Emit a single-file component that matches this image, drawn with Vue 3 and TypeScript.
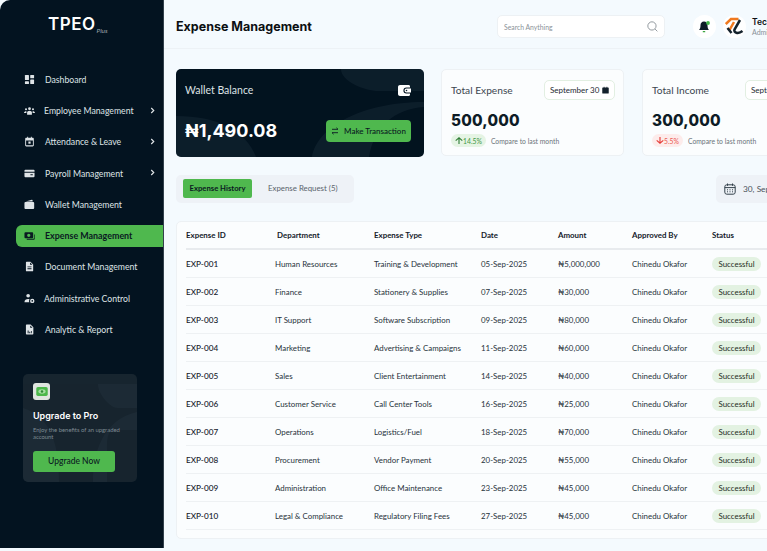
<script setup lang="ts">
interface NavItem { label: string; icon: string; arrow?: boolean; active?: boolean; shift?: boolean }
const nav: NavItem[] = [
  { label: 'Dashboard', icon: 'dash' },
  { label: 'Employee Management', icon: 'people', arrow: true, shift: true },
  { label: 'Attendance & Leave', icon: 'cal', arrow: true },
  { label: 'Payroll Management', icon: 'pay', arrow: true },
  { label: 'Wallet Management', icon: 'wallet' },
  { label: 'Expense Management', icon: 'cash', active: true },
  { label: 'Document Management', icon: 'doc' },
  { label: 'Administrative Control', icon: 'admin', shift: true },
  { label: 'Analytic & Report', icon: 'report' },
]
const rows = [
  ['EXP-001', 'Human Resources', 'Training & Development', '05-Sep-2025', '₦5,000,000'],
  ['EXP-002', 'Finance', 'Stationery & Supplies', '07-Sep-2025', '₦30,000'],
  ['EXP-003', 'IT Support', 'Software Subscription', '09-Sep-2025', '₦80,000'],
  ['EXP-004', 'Marketing', 'Advertising & Campaigns', '11-Sep-2025', '₦60,000'],
  ['EXP-005', 'Sales', 'Client Entertainment', '14-Sep-2025', '₦40,000'],
  ['EXP-006', 'Customer Service', 'Call Center Tools', '16-Sep-2025', '₦25,000'],
  ['EXP-007', 'Operations', 'Logistics/Fuel', '18-Sep-2025', '₦70,000'],
  ['EXP-008', 'Procurement', 'Vendor Payment', '20-Sep-2025', '₦55,000'],
  ['EXP-009', 'Administration', 'Office Maintenance', '23-Sep-2025', '₦45,000'],
  ['EXP-010', 'Legal & Compliance', 'Regulatory Filing Fees', '27-Sep-2025', '₦45,000'],
]
</script>

<template>
  <div class="app">
    <aside class="side">
      <div class="logo"><span class="logo-word">TPEO</span><span class="logo-plus">Plus</span></div>
      <nav class="nav">
        <div v-for="n in nav" :key="n.label" class="nav-item" :class="{ active: n.active, shift: n.shift }">
          <svg class="nav-ic" viewBox="0 0 12 12" fill="currentColor">
            <template v-if="n.icon === 'dash'">
              <rect x="1" y="1" width="4.4" height="5.6" rx=".6" /><rect x="6.8" y="1" width="4.2" height="3.6" rx=".6" />
              <rect x="1" y="8" width="4.4" height="3" rx=".6" /><rect x="6.8" y="6" width="4.2" height="5" rx=".6" />
            </template>
            <template v-else-if="n.icon === 'people'">
              <circle cx="6" cy="4" r="1.5" /><circle cx="2.2" cy="4.6" r="1.1" /><circle cx="9.8" cy="4.6" r="1.1" />
              <path d="M3.4 10.5V8.2c0-1 1.1-1.8 2.6-1.8s2.6.8 2.6 1.8v2.3z" /><path d="M0 8.6c0-1 .9-1.7 2.6-1.7v1.9H0zM12 8.6c0-1-.9-1.7-2.6-1.7v1.9H12z" />
            </template>
            <template v-else-if="n.icon === 'cal'">
              <path fill-rule="evenodd" d="M2.5 1.8h1V.8h1v1h3v-1h1v1h1c.7 0 1.2.5 1.2 1.2v7.2c0 .7-.5 1.2-1.2 1.2h-7c-.7 0-1.2-.5-1.2-1.2V3c0-.7.5-1.2 1.2-1.2zm-.2 3v5.4h7.4V4.8z" /><rect x="4.8" y="6" width="2.4" height="2.4" />
            </template>
            <template v-else-if="n.icon === 'pay'">
              <path d="M1.5 2h9c.6 0 1 .4 1 1v1.2H.5V3c0-.6.4-1 1-1z" /><path fill-rule="evenodd" d="M.5 5.200h11V9c0 .6-.4 1-1 1h-9c-.6 0-1-.4-1-1zM7 6.800V8h2.600V6.800z" />
            </template>
            <template v-else-if="n.icon === 'wallet'">
              <path d="M1.800 2.700 8.500.9c.5-.1.9.2.9.700v1.100H1.800z" /><path d="M1.500 3.300h8.600c.6 0 1 .4 1 1v5.500c0 .6-.4 1-1 1H1.500c-.6 0-1-.4-1-1V4.300c0-.6.4-1 1-1z" />
            </template>
            <template v-else-if="n.icon === 'cash'">
              <path fill-rule="evenodd" d="M1.500 2.500h7.500c.6 0 1 .4 1 1v4.500c0 .6-.4 1-1 1H1.500c-.6 0-1-.4-1-1V3.500c0-.6.4-1 1-1zm3.700 1.500a1.800 1.800 0 1 0 0 3.600 1.800 1.800 0 0 0 0-3.600z" /><path d="M11 4.500c.4.100.7.400.7 1v4c0 .6-.4 1-1 1H3v-.9h7.200c.5 0 .8-.3.800-.8z" />
            </template>
            <template v-else-if="n.icon === 'doc'">
              <path fill-rule="evenodd" d="M2.800.8h4.200l3 3v6.700c0 .4-.3.700-.7.700H2.800c-.4 0-.7-.3-.7-.7V1.500c0-.4.3-.7.7-.7zM6.600 1.600V4.200h2.600zM3.800 6v.9h4.400V6zm0 2v.9h4.400V8z" />
            </template>
            <template v-else-if="n.icon === 'admin'">
              <circle cx="4.500" cy="3" r="2" /><path d="M.5 10c0-2.200 1.800-3.500 4-3.500.6 0 1.100.1 1.600.2-.4.500-.6 1.200-.6 1.900 0 .5.100 1 .3 1.400z" />
              <path fill-rule="evenodd" d="M9 6.200a2.400 2.400 0 1 1 0 4.800 2.400 2.400 0 0 1 0-4.800zm0 1.500a.9.9 0 1 0 0 1.800.9.9 0 0 0 0-1.800z" />
            </template>
            <template v-else>
              <path fill-rule="evenodd" d="M2.800.6h4.400l3 3v7c0 .4-.3.800-.7.800H2.800c-.4 0-.7-.4-.7-.8V1.400c0-.4.3-.8.700-.8zM6.800 1.500v2.500h2.500zM4 7v3h1V7zm1.800 1.400V10h1V8.400zm1.800-.8V10h.8V7.600z" />
            </template>
          </svg>
          <span class="nav-label">{{ n.label }}</span>
          <svg v-if="n.arrow" class="nav-arrow" viewBox="0 0 6 8" fill="none" stroke="currentColor" stroke-width="1.400"><path d="M1.500 1 4.500 4 1.500 7" /></svg>
        </div>
      </nav>
      <div class="promo">
        <svg class="promo-deco" viewBox="0 0 114 108" fill="#2a3a46" opacity=".3">
          <path d="M75 10h39v24H95c-8 0-20-14-20-24zM70 108c0-30 10-62 44-70v18H92c-8 0-8 10-8 20v32zM0 34c30 10 36 40 36 74H0z" />
        </svg>
        <div class="promo-ic">
          <svg width="12" height="9" viewBox="0 0 14 11"><rect width="14" height="11" rx="2" fill="#4cb84a" /><ellipse cx="7" cy="5.500" rx="4.400" ry="2.600" fill="#a5dfa0" /><circle cx="7" cy="5.500" r="1.500" fill="#2f8a35" /></svg>
        </div>
        <div class="promo-title">Upgrade to Pro</div>
        <div class="promo-text">Enjoy the benefits of an upgraded account</div>
        <button class="promo-btn">Upgrade Now</button>
      </div>
    </aside>

    <main class="main">
      <header class="top">
        <h1 class="title">Expense Management</h1>
        <div class="search">
          <span>Search Anything</span>
          <svg width="11" height="11" viewBox="0 0 12 12" fill="none" stroke="#7d858c" stroke-width=".9"><circle cx="5.400" cy="5.400" r="4.500" /><path d="m8.800 8.800 2.500 2.500" /></svg>
        </div>
        <div class="circle bell">
          <svg width="13" height="14" viewBox="0 0 13 14"><path fill="#0d1b26" d="M6 1.500c2.300 0 3.500 1.800 3.500 3.800 0 2.500.6 3.700 1.500 4.700H1c.9-1 1.500-2.200 1.500-4.700 0-2 1.200-3.800 3.500-3.800z" /><rect x="4.700" y="11" width="2.600" height="1.300" rx=".6" fill="#3aa53d" /><circle cx="10" cy="3" r="1.900" fill="#42b649" /></svg>
        </div>
        <div class="circle avatar">
          <svg width="19" height="19" viewBox="0 0 19 19" fill="none" stroke-width="2.500"><path stroke="#f0791f" d="M.8 7 6 2h7.500M9 5 4.500 13" /><path stroke="#14222c" d="M15 3 9.500 12.500c-1.200 3 3.500 5 8 1.500M2.500 11 6.500 16" /></svg>
        </div>
        <div class="who"><b>Tech Admin</b><span>Admin</span></div>
      </header>

      <section class="content">
        <div class="cards">
          <div class="wallet">
            <svg class="wallet-deco" viewBox="0 0 248 88" fill="#1c2e3b" opacity=".42">
              <path d="M165 0h83v22h-45c-15 0-38-10-38-22zM136 88c5-30 50-55 112-55v5c-30 2-50 20-55 50zM0 47c40 0 70 14 80 41H0z" />
            </svg>
            <div class="wallet-head">
              <span>Wallet Balance</span>
              <svg width="13" height="11" viewBox="0 0 13 11"><path fill-rule="evenodd" fill="#fff" d="M2 0h8.500c1 0 1.500.6 1.500 1.500v1.100H8.300a2.900 2.900 0 0 0 0 5.800H12v1.100c0 .9-.5 1.500-1.500 1.500H2C.9 11 0 10.100 0 9V2C0 .9.900 0 2 0zm6.500 3.500h4.500v4H8.500a2 2 0 1 1 0-4zm0 1.200a.8.8 0 1 0 0 1.600.8.8 0 0 0 0-1.600z" /></svg>
            </div>
            <div class="wallet-foot">
              <span class="balance">₦1,490.08</span>
              <button class="make">
                <svg width="8" height="8" viewBox="0 0 8 8" fill="none" stroke="#0c1a24" stroke-width=".9"><path d="M1 2.300h6L5.400.8M7 5.700H1l1.600 1.500" /></svg>
                Make Transaction
              </button>
            </div>
          </div>

          <div class="stat">
            <div class="stat-head">
              <span>Total Expense</span>
              <div class="pick">September 30 <svg width="7" height="8" viewBox="0 0 8 8" fill="#12202b"><path d="M1 1h1V.2h.8V1h2.400V.2H6V1h1c.4 0 .7.3.7.7v5.600c0 .4-.3.700-.7.700H1c-.4 0-.7-.3-.7-.7V1.700c0-.4.3-.7.7-.7z" /></svg></div>
            </div>
            <div class="stat-val">500,000</div>
            <div class="stat-foot">
              <span class="chg up"><svg width="8" height="7" viewBox="0 0 8 7" fill="none" stroke="#2f7d35" stroke-width="1.100"><path d="M.7 3.600 4 .8l3.300 2.800M4 .8V7" /></svg>14.5%</span>
              <span class="cmp">Compare to last month</span>
            </div>
          </div>

          <div class="stat">
            <div class="stat-head">
              <span>Total Income</span>
              <div class="pick">September 30 <svg width="7" height="8" viewBox="0 0 8 8" fill="#12202b"><path d="M1 1h1V.2h.8V1h2.400V.2H6V1h1c.4 0 .7.3.7.7v5.600c0 .4-.3.700-.7.700H1c-.4 0-.7-.3-.7-.7V1.700c0-.4.3-.7.7-.7z" /></svg></div>
            </div>
            <div class="stat-val">300,000</div>
            <div class="stat-foot">
              <span class="chg down"><svg width="8" height="7" viewBox="0 0 8 7" fill="none" stroke="#e53935" stroke-width="1.100"><path d="M.7 3.400 4 6.200l3.300-2.800M4 6.200V0" /></svg>5.5%</span>
              <span class="cmp">Compare to last month</span>
            </div>
          </div>
        </div>

        <div class="filters">
          <div class="tabs">
            <div class="tab on">Expense History</div>
            <div class="tab">Expense Request (5)</div>
          </div>
          <div class="range">
            <svg width="12" height="12" viewBox="0 0 12 12" fill="none" stroke="#33404a" stroke-width="1"><rect x=".8" y="1.800" width="10.400" height="9.400" rx="2" /><path d="M.8 4.600h10.400M3.500.5v2.300M8.500.5v2.300M3 6.800h1M5.500 6.800h1M8 6.800h1M3 8.800h1M5.500 8.800h1M8 8.800h1" /></svg>
            <span>30, Sep 2025 - 30, Oct 2025</span>
          </div>
        </div>

        <div class="table">
          <div class="tr th">
            <span>Expense ID</span><span class="dept">Department</span><span>Expense Type</span><span>Date</span><span>Amount</span><span>Approved By</span><span>Status</span>
          </div>
          <div v-for="r in rows" :key="r[0]" class="tr">
            <span class="id">{{ r[0] }}</span><span>{{ r[1] }}</span><span>{{ r[2] }}</span><span>{{ r[3] }}</span><span>{{ r[4] }}</span><span>Chinedu Okafor</span><span><i class="pill">Successful</i></span>
          </div>
        </div>
      </section>
    </main>
  </div>
</template>

<style>
html, body { margin: 0; background: #f4fafe; overflow: hidden; }
</style>

<style scoped>
.app { display: flex; width: 767px; height: 551px; overflow: hidden; background: #f4fafe; font-family: Lato, sans-serif; color: #14202a; }
.side { width: 164px; height: 548px; flex: none; background: #031320; border-right: 1px solid #33414c; box-sizing: border-box; border-top-left-radius: 10px; display: flex; flex-direction: column; }
.logo { height: 54px; box-sizing: border-box; padding: 15px 0 0 48px; display: flex; align-items: flex-start; color: #fff; }
.logo-word { font: 600 17px/18px Inter, sans-serif; letter-spacing: .5px; }
.logo-plus { font: italic 400 6.500px/8px Lato, sans-serif; color: #9aa5ad; margin: 12px 0 0 1px; }
.nav { margin-top: 14.450px; display: flex; flex-direction: column; gap: 9.250px; }
.nav-item { position: relative; height: 22px; margin-left: 16px; padding-left: 8px; display: flex; align-items: center; gap: 10px; color: #dfe4e7; font-size: 8.700px; border-radius: 6px 0 0 6px; }
.nav-item.shift { gap: 9px; }
.nav-item.active { background: #4fb84e; color: #0a1a22; font-weight: 700; font-size: 8.900px; }
.nav-ic { width: 11px; height: 11px; flex: none; }
.nav-arrow { position: absolute; right: 8px; top: 7px; width: 5px; height: 7px; }
.promo { position: relative; overflow: hidden; margin: 33.500px 0 0 23px; width: 114px; height: 108px; box-sizing: border-box; padding: 9px 10px; border-radius: 5px; background: #17252f; }
.promo-deco { position: absolute; inset: 0; }
.promo-ic { position: relative; width: 17px; height: 17px; border-radius: 3px; background: #dfe5df; display: flex; align-items: center; justify-content: center; }
.promo-title { position: relative; margin-top: 10px; font: 600 9px/12px Inter, sans-serif; color: #fff; }
.promo-text { position: relative; margin-top: 4px; font-size: 5.900px; line-height: 7.500px; color: #7f8b93; }
.promo-btn { position: relative; display: block; margin-top: 10px; width: 82px; height: 21px; padding: 0; border: 0; border-radius: 3px; background: #4fb84e; color: #0a1a22; font: 500 8.500px Lato, sans-serif; }
.main { flex: none; width: 603px; }
.top { height: 49px; box-sizing: border-box; padding-top: 5px; border-bottom: 1px solid #edf2f6; display: flex; align-items: center; padding-left: 12px; }
.title { margin: 0; width: 321px; flex: none; font: 700 12.500px/18px Inter, sans-serif; color: #0b0f12; }
.search { width: 168px; height: 23px; flex: none; box-sizing: border-box; padding: 0 6px; display: flex; align-items: center; justify-content: space-between; background: #fff; border: 1px solid #edf1f4; border-radius: 5px; font-size: 6.800px; color: #8a9198; }
.circle { width: 23px; height: 23px; flex: none; border-radius: 50%; background: #fff; display: flex; align-items: center; justify-content: center; }
.bell { margin-left: 28px; }
.avatar { margin-left: 7px; }
.who { margin-left: 6px; display: flex; flex-direction: column; gap: 1px; white-space: nowrap; }
.who b { font: 600 8.500px/10px Inter, sans-serif; color: #0b0f12; }
.who span { font-size: 7px; line-height: 9px; color: #8a9198; }
.content { padding: 20px 0 0 12px; }
.cards { display: flex; gap: 17px; }
.wallet { position: relative; overflow: hidden; width: 248px; height: 88px; flex: none; box-sizing: border-box; padding: 15px 13px 15px 9px; background: #031320; border-radius: 5px; color: #fff; display: flex; flex-direction: column; justify-content: space-between; }
.wallet-deco { position: absolute; inset: 0; }
.wallet-head, .wallet-foot { position: relative; display: flex; justify-content: space-between; align-items: center; }
.wallet-head { font-size: 10.500px; color: #dde2e5; }
.balance { font: 700 18px/22px Inter, sans-serif; color: #fff; }
.make { display: flex; align-items: center; justify-content: center; gap: 5px; width: 85px; height: 22px; padding: 0; border: 0; border-radius: 4px; background: #4fb84e; color: #0a1a22; font: 500 8px Lato, sans-serif; }
.stat { width: 183px; height: 87px; flex: none; box-sizing: border-box; padding: 10px 8px 0 9px; background: #fbfdfe; border: 1px solid #edf1f4; border-radius: 5px; }
.stat + .stat { margin-left: 1px; }
.stat-head { display: flex; justify-content: space-between; align-items: center; font-size: 10.200px; color: #3c4650; }
.pick { width: 71px; height: 20px; box-sizing: border-box; display: flex; align-items: center; justify-content: space-between; padding: 0 5px; border: 1px solid #e2efe2; border-radius: 5px; font-size: 8px; color: #1e2a33; white-space: nowrap; background: #fff; }
.stat-val { margin-top: 11px; font: 800 15.300px/20px Inter, sans-serif; color: #0d1b26; letter-spacing: .2px; }
.stat-foot { margin-top: 3px; display: flex; align-items: center; gap: 5px; font-size: 6.800px; }
.chg { display: flex; align-items: center; justify-content: center; height: 13px; border-radius: 7px; padding: 0 4px; white-space: nowrap; }
.chg.up { background: #e5f4e4; color: #3f9845; }
.chg.down { background: #fdeceb; color: #ec5a52; }
.cmp { color: #6c747b; }
.filters { margin-top: 18px; display: flex; justify-content: space-between; width: 700px; }
.tabs { width: 178px; height: 28px; box-sizing: border-box; padding: 4px 7px 5px; background: #eef2f7; border-radius: 5px; display: flex; gap: 16px; align-items: stretch; }
.tab { font-size: 7.850px; line-height: 19px; color: #5a636b; white-space: nowrap; }
.tab.on { width: 69px; text-align: center; background: #4fb84e; border-radius: 2px; color: #0a1a22; font-weight: 700; font-size: 7.700px; }
.range { width: 160px; height: 28px; box-sizing: border-box; padding-left: 8px; background: #eef2f7; border-radius: 5px; display: flex; align-items: center; gap: 7px; font-size: 8.300px; color: #4a535b; white-space: nowrap; }
.table { margin-top: 18px; width: 640px; height: 318px; box-sizing: border-box; padding: 0 9px; background: #fbfdfe; border: 1px solid #edf1f4; border-radius: 5px; }
.tr { display: grid; box-sizing: border-box; grid-template-columns: 89px 99px 107px 77px 74px 80px 1fr; align-items: center; height: 28px; border-bottom: 1px solid #eef1f3; font-size: 7.900px; color: #27323b; white-space: nowrap; }
.tr.th { border-bottom: 2px solid #e8ebee; color: #14202a; font-weight: 700; }
.dept { padding-left: 2px; }
.id { color: #14202a; font-weight: 500; font-size: 8.200px; }
.pill { display: inline-block; font-style: normal; width: 49px; height: 14px; line-height: 14px; text-align: center; border-radius: 7px; background: #e3f2e2; color: #1f2d24; }
</style>
